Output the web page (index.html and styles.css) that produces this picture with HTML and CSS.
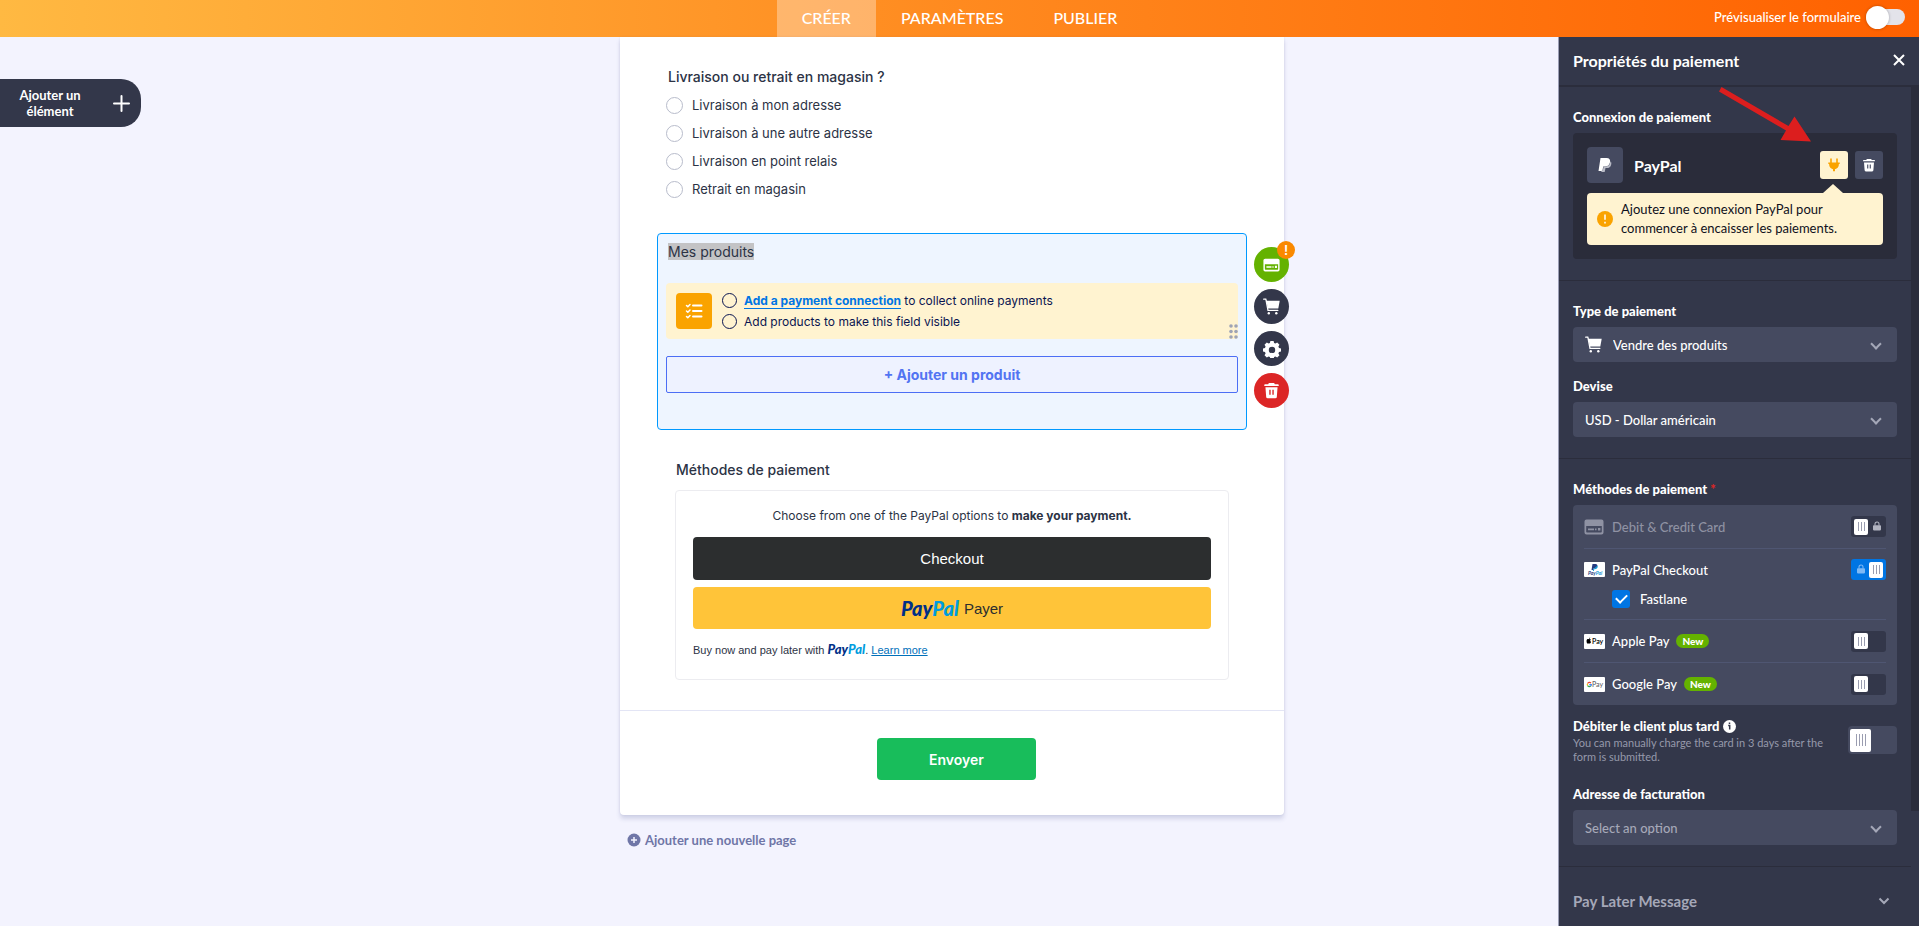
FILE: index.html
```html
<!DOCTYPE html>
<html lang="fr">
<head>
   <meta charset="UTF-8">
   <meta name="viewport" content="width=device-width, initial-scale=1">
   <link rel="stylesheet" href="styles.css">
   <title>Propriétés du paiement</title>
</head>

<body>
   <!-- Icônes partagées -->
   <svg class="sprite" aria-hidden="true">
      <symbol id="cart" viewBox="0 0 17 17">
         <path d="M.7 1.2h2.1l.7 2.4M3.2 3 5 12.4h9.8" fill="none" stroke="currentColor" stroke-width="1.3" stroke-linecap="round"/>
         <path d="M3.4 2.8h13.3l-1.4 7.8H4.9z"/>
         <circle cx="5.8" cy="15.2" r="1.2"/><circle cx="13.3" cy="15.2" r="1.2"/>
      </symbol>
      <symbol id="trash" viewBox="0 0 16 16">
         <path d="M5.5 1h5l.6 1.2h3c.4 0 .7.3.7.7v.9H1.2v-.9c0-.4.3-.7.7-.7h3zM2.3 5h11.4l-.7 9a1.4 1.4 0 0 1-1.4 1.3H4.4A1.4 1.4 0 0 1 3 14zM5.9 7.3v4.8h1.3V7.3zm2.9 0v4.8h1.3V7.3z" fill-rule="evenodd"/>
      </symbol>
      <symbol id="card" viewBox="0 0 20 16">
         <path d="M2.5 .5h15a2 2 0 0 1 2 2v11a2 2 0 0 1-2 2h-15a2 2 0 0 1-2-2v-11a2 2 0 0 1 2-2zM2.2 7v5.8c0 .5.3.8.8.8h14c.5 0 .8-.3.8-.8V7z" fill-rule="evenodd"/>
         <path d="M4 9.4h6v1.8H4zM11 9.4h1.5v1.8H11zM14 9h2.4v2.5H14z"/>
      </symbol>
      <symbol id="lock" viewBox="0 0 10 12">
         <path d="M1 5h8c.6 0 1 .4 1 1v4.5c0 .6-.4 1-1 1H1c-.6 0-1-.4-1-1V6c0-.6.4-1 1-1z"/>
         <path d="M2.5 5.5V3.5a2.5 2.5 0 0 1 5 0v2" fill="none" stroke="currentColor" stroke-width="1.3"/>
      </symbol>
   </svg>

   <header class="topbar">
      <nav class="tabs">
         <a href="#creer" class="tab active">CRÉER</a>
         <a href="#parametres" class="tab">PARAMÈTRES</a>
         <a href="#publier" class="tab">PUBLIER</a>
      </nav>
      <label class="preview">Prévisualiser le formulaire
         <input type="checkbox" class="preview-switch">
      </label>
   </header>

   <div class="workspace">
      <button class="add-element">
         <span>Ajouter un élément</span>
         <svg width="17" height="17" viewBox="0 0 17 17"><path d="M8.5 1v15M1 8.5h15" stroke="#fff" stroke-width="2" stroke-linecap="round"/></svg>
      </button>

      <main class="canvas">
         <div class="sheet">
            <fieldset class="delivery">
               <legend>Livraison ou retrait en magasin ?</legend>
               <label><input type="radio" name="delivery">Livraison à mon adresse</label>
               <label><input type="radio" name="delivery">Livraison à une autre adresse</label>
               <label><input type="radio" name="delivery">Livraison en point relais</label>
               <label><input type="radio" name="delivery">Retrait en magasin</label>
            </fieldset>

            <section class="products">
               <h2><mark>Mes produits</mark></h2>
               <div class="todo">
                  <span class="todo-icon">
                     <svg width="18" height="18" viewBox="0 0 18 18" fill="none" stroke="#fff" stroke-linecap="round" stroke-linejoin="round"><path d="M1.5 3.5 2.8 4.8 5 2.5M1.5 9 2.8 10.3 5 8M1.5 14.5 2.8 15.8 5 13.5" stroke-width="1.5"/><path d="M8 3.5h8.5M8 9h8.5M8 14.5h8.5" stroke-width="2"/></svg>
                  </span>
                  <ul>
                     <li><span><a href="#connexion">Add a payment connection</a> to collect online payments</span></li>
                     <li><span>Add products to make this field visible</span></li>
                  </ul>
                  <svg class="drag" width="9" height="15" viewBox="0 0 9 15" fill="#9ea3b5"><circle cx="2" cy="2" r="1.8"/><circle cx="7" cy="2" r="1.8"/><circle cx="2" cy="7.5" r="1.8"/><circle cx="7" cy="7.5" r="1.8"/><circle cx="2" cy="13" r="1.8"/><circle cx="7" cy="13" r="1.8"/></svg>
               </div>
               <button class="add-product">+ Ajouter un produit</button>

               <div class="field-actions">
                  <button class="round green" aria-label="Paiement"><svg width="17" height="14"><use href="#card"/></svg><span class="badge">!</span></button>
                  <button class="round" aria-label="Produits"><svg width="17" height="17"><use href="#cart"/></svg></button>
                  <button class="round" aria-label="Réglages">
                     <svg width="18" height="18" viewBox="0 0 18 18"><path fill-rule="evenodd" d="M7.4 1h3.2l.5 2 1.3.6 1.8-1.1 2.3 2.3-1.1 1.8.6 1.3 2 .5v3.2l-2 .5-.6 1.3 1.1 1.8-2.3 2.3-1.8-1.1-1.3.6-.5 2H7.4l-.5-2-1.3-.6-1.8 1.1-2.3-2.3 1.1-1.8-.6-1.300-2-.5V8.400l2-.5.6-1.300-1.100-1.800 2.300-2.300 1.800 1.100L6.900 3zM9 6.700a3.200 3.200 0 1 0 0 6.400 3.200 3.200 0 0 0 0-6.400z"/></svg>
                  </button>
                  <button class="round red" aria-label="Supprimer"><svg width="17" height="17"><use href="#trash"/></svg></button>
               </div>
            </section>

            <section class="methods">
               <h2>Méthodes de paiement</h2>
               <div class="methods-box">
                  <p class="choose">Choose from one of the PayPal options to <b>make your payment.</b></p>
                  <button class="checkout">Checkout</button>
                  <button class="payer"><span class="pp-logo">Pay<i>Pal</i></span> Payer</button>
                  <p class="later">Buy now and pay later with <span class="pp-logo small">Pay<i>Pal</i></span>. <a href="#more">Learn more</a></p>
               </div>
            </section>

            <footer class="submit"><button>Envoyer</button></footer>
         </div>

         <button class="new-page">
            <svg width="14" height="14" viewBox="0 0 14 14"><circle cx="7" cy="7" r="6.5" fill="#6f76a7"/><path d="M7 4v6M4 7h6" stroke="#f3f3fe" stroke-width="1.5"/></svg>
            Ajouter une nouvelle page
         </button>
      </main>

      <aside class="panel">
         <header class="panel-head">
            <h1>Propriétés du paiement</h1>
            <button aria-label="Fermer"><svg width="12" height="12" viewBox="0 0 12 12"><path d="M1 1l10 10M11 1 1 11" stroke="#fff" stroke-width="2"/></svg></button>
         </header>

         <div class="panel-body">
            <div class="panel-content">
               <section class="block connection">
                  <h3>Connexion de paiement</h3>
                  <div class="account">
                     <div class="account-row">
                        <span class="account-icon"><svg width="14" height="16" viewBox="0 0 14 16"><path d="M2.5 1h6c3 0 4 1.7 3.5 4.2C11.4 8.4 9.5 9.5 7 9.5H5.2L4.4 14H.5z" fill="#fff"/><path d="M12.5 4.2c1 .8 1 2 .7 3.2-.5 2.7-2.2 3.7-4.5 3.7H7.5L6.7 15H3.3l.3-1.5h1.2l.8-4H7c2.9 0 4.9-1.4 5.5-5.3z" fill="#b9bbc6"/></svg></span>
                        <strong>PayPal</strong>
                        <button class="square plug" aria-label="Connecter"><svg width="12" height="14" viewBox="0 0 12 14" fill="#faa300"><path d="M2.2.5h1.6v4H2.2zM8.2.5h1.6v4H8.2zM.3 4.5h11.4v1.6h-.8c0 2.7-1.4 4.7-3.9 5.2v2H5v-2C2.5 10.8 1.1 8.8 1.1 6.1H.3z"/></svg></button>
                        <button class="square" aria-label="Supprimer"><svg width="14" height="14"><use href="#trash"/></svg></button>
                     </div>
                     <div class="tip">
                        <svg width="16" height="16" viewBox="0 0 16 16"><circle cx="8" cy="8" r="8" fill="#faa300"/><path d="M8 3.5v5.3M8 10.8v1.7" stroke="#fff" stroke-width="1.5"/></svg>
                        <p>Ajoutez une connexion PayPal pour commencer à encaisser les paiements.</p>
                     </div>
                  </div>
               </section>

               <section class="block">
                  <label for="type">Type de paiement</label>
                  <div class="pick with-icon">
                     <svg width="17" height="17"><use href="#cart"/></svg>
                     <select id="type"><option>Vendre des produits</option></select>
                  </div>
                  <label for="currency" class="next">Devise</label>
                  <div class="pick"><select id="currency"><option>USD - Dollar américain</option></select></div>
               </section>

               <section class="block gateways">
                  <h3>Méthodes de paiement <em>*</em></h3>
                  <ul>
                     <li class="off">
                        <svg width="20" height="16"><use href="#card"/></svg>
                        <label for="card-pay">Debit &amp; Credit Card</label>
                        <span class="switch"><input type="checkbox" id="card-pay"><svg width="8" height="10"><use href="#lock"/></svg></span>
                     </li>
                     <li class="tall">
                        <div class="line">
                           <svg width="21" height="15" viewBox="0 0 21 15"><rect width="21" height="15" rx="1" fill="#fff"/><path d="M8.5 2h3c1.5 0 2.2 1 1.8 2.3-.3 1.3-1.2 1.9-2.6 1.9h-1L9.3 8H7.5z" fill="#253b80"/><path d="M13.5 3.5c.7 1.7-.3 3.7-2.5 3.7h-.9L9.9 9H8.800l.4-1.700z" fill="#179bd7"/><text x="4" y="13" font-size="5" font-weight="700" font-style="italic" fill="#253b80">Pay<tspan fill="#179bd7">Pal</tspan></text></svg>
                           <label for="pp-checkout">PayPal Checkout</label>
                           <span class="switch"><input type="checkbox" id="pp-checkout" checked><svg width="8" height="10"><use href="#lock"/></svg></span>
                        </div>
                        <label class="fastlane"><input type="checkbox" checked>Fastlane</label>
                     </li>
                     <li>
                        <svg width="21" height="15" viewBox="0 0 21 15"><rect width="21" height="15" rx="1" fill="#fff"/><g fill="#000"><path d="M5.2 5.2c.8-.4 1.6 0 1.7.2-1 .6-.8 2 .2 2.400-.3 1-.9 1.800-1.500 1.800-.4 0-.6-.2-1-.2s-.6.200-1 .2C2.800 9.600 2 6.200 3.200 5.300c.7-.5 1.500 0 2-.1zM5 4.900c0-.8.5-1.400 1.200-1.500 0 .8-.5 1.400-1.200 1.500z"/><text x="8" y="10" font-size="7" font-weight="600">Pay</text></g></svg>
                        <label for="apple">Apple Pay</label><span class="new">New</span>
                        <span class="switch"><input type="checkbox" id="apple"></span>
                     </li>
                     <li>
                        <svg width="21" height="15" viewBox="0 0 21 15"><rect width="21" height="15" rx="1" fill="#fff"/><g fill="none" stroke-width="1.2"><path d="M7 6.100A2 2 0 0 0 3.600 6.600" stroke="#ea4335"/><path d="M3.600 6.600a2 2 0 0 0 0 2" stroke="#fbbc05"/><path d="M3.600 8.600A2 2 0 0 0 6.700 9" stroke="#34a853"/><path d="M5.300 7.700h2c0 .5-.2 1-.6 1.400" stroke="#4285f4"/></g><text x="8" y="10" font-size="7" fill="#5f6368">Pay</text></svg>
                        <label for="google">Google Pay</label><span class="new">New</span>
                        <span class="switch"><input type="checkbox" id="google"></span>
                     </li>
                  </ul>

                  <div class="charge">
                     <div>
                        <label for="charge">Débiter le client plus tard <svg width="13" height="13" viewBox="0 0 13 13"><circle cx="6.5" cy="6.5" r="6.5" fill="#fff"/><path d="M6.500 2.600v1.500M5.200 5.600h1.500v4" stroke="#33374a" stroke-width="1.5" fill="none"/></svg></label>
                        <p>You can manually charge the card in 3 days after the form is submitted.</p>
                     </div>
                     <input type="checkbox" id="charge">
                  </div>

                  <label for="billing">Adresse de facturation</label>
                  <div class="pick empty"><select id="billing"><option>Select an option</option></select></div>
               </section>

               <button class="block later-message">Pay Later Message
                  <svg width="12" height="8" viewBox="0 0 12 8"><path d="M1.5 1.5 6 6l4.5-4.5" fill="none" stroke="#a5a8b8" stroke-width="2"/></svg>
               </button>
            </div>
            <div class="scroll"></div>
         </div>

         <svg class="arrow" width="94" height="56" viewBox="0 0 94 56"><path d="M3.5 0 70.5 39 76.5 29.5 93 54.5 62.5 53 68 43.5 1 4.5z" fill="#dc1e1e"/></svg>
      </aside>
   </div>
</body>
</html>
```

FILE: styles.css
```css
* {
   margin:0;
   padding:0;
   box-sizing:border-box;
}

body {
   display:flex;
   flex-direction:column;
   height:100vh;
   overflow:hidden;
   background:#f3f3fe;
   color:#2c3345;
   font-family:"Inter", sans-serif;
   font-size:13px;
}

button, input, select {
   border:0;
   background:none;
   color:inherit;
   font:inherit;
   cursor:pointer;
   appearance:none;
}

ul {
   list-style:none;
}

svg {
   display:block;
   flex:none;
}

svg:not([fill]) {
   fill:currentColor;
}

.sprite {
   position:absolute;
   width:0;
   height:0;
}

/* Barre du haut */
.topbar, .add-element, .new-page, .panel {
   font-family:"Lato", sans-serif;
}

.topbar {
   display:grid;
   grid-template-columns:1fr auto 1fr;
   height:37px;
   flex:none;
   background:linear-gradient(90deg, #ffb942, #ff8a1f 50%, #ff6100);
   color:#fff;
}

.tabs {
   display:flex;
   grid-column:2;
}

.tab {
   padding:0 25px;
   color:#fff;
   font-size:16px;
   font-weight:500;
   line-height:35px;
   text-decoration:none;
}

.tab.active {
   background:rgba(255,255,255,.33);
}

.preview {
   display:flex;
   align-items:center;
   justify-content:flex-end;
   gap:5px;
   padding:0 14px 3px 0;
   font-weight:500;
}

.preview-switch {
   display:flex;
   align-items:center;
   width:39px;
   height:16px;
   border-radius:8px;
   background:#e3e3ea;
}

.preview-switch::before {
   content:"";
   width:23px;
   height:23px;
   flex:none;
   border-radius:50%;
   background:#fff;
   box-shadow:0 0 3px rgba(0,0,0,.3);
}

.workspace {
   display:grid;
   grid-template-columns:1fr 664px 1fr 15px;
   grid-template-rows:100%;
   flex:1;
   min-height:0;
}

.add-element {
   display:flex;
   align-items:center;
   justify-content:space-between;
   width:141px;
   height:48px;
   margin-top:42px;
   padding:0 11px 0 15px;
   border-radius:0 20px 20px 0;
   background:#33374a;
   color:#fff;
   font-weight:700;
   line-height:16px;
}

.add-element span {
   width:70px;
}

/* Formulaire */
.sheet {
   border-radius:0 0 4px 4px;
   background:#fff;
   box-shadow:0 4px 4px rgba(84,95,150,.2), 0 0 2px rgba(84,95,150,.15);
}

.delivery {
   padding:34px 46px 0;
   border:0;
}

.delivery legend {
   padding:30px 2px 0;
   margin-bottom:-30px;
   font-size:14px;
   font-weight:500;
   line-height:20px;
}

.delivery label {
   display:flex;
   align-items:center;
   gap:9px;
   height:28px;
}

.delivery input {
   width:17px;
   height:17px;
   border:1px solid #b8bccb;
   border-radius:50%;
}

.products {
   position:relative;
   margin:30px 37px 0;
   padding:9px 8px 36px;
   border:1px solid #0099ff;
   border-radius:4px;
   background:#eef5ff;
}

h2 {
   font-size:14px;
   font-weight:500;
   line-height:18px;
}

.products h2 {
   margin-left:2px;
   font-weight:400;
}

.products mark {
   background:#c3c3c5;
   color:#2c3345;
}

.todo {
   display:flex;
   align-items:center;
   gap:10px;
   position:relative;
   height:56px;
   margin:22px 0 17px;
   padding:0 10px;
   border-radius:4px;
   background:#fff3d0;
   color:#0a1551;
   font-size:12px;
}

.todo-icon {
   display:grid;
   place-items:center;
   width:36px;
   height:36px;
   border-radius:4px;
   background:#faa300;
}

.todo li {
   display:flex;
   align-items:center;
   gap:7px;
   height:21px;
}

.todo li::before {
   content:"";
   width:13px;
   height:13px;
   border:1px solid #0a1551;
   border-radius:50%;
}

.todo a {
   border-bottom:1px solid #0075e3;
   color:#0075e3;
   font-weight:700;
   text-decoration:none;
}

.drag {
   position:absolute;
   right:0;
   bottom:0;
}

.add-product {
   display:block;
   width:100%;
   height:37px;
   border:1px solid #4c6ef5;
   border-radius:2px;
   background:#eef2ff;
   color:#5274f2;
   font-size:14px;
   font-weight:700;
}

.field-actions {
   display:flex;
   flex-direction:column;
   gap:7px;
   position:absolute;
   left:596px;
   top:13px;
}

.round {
   display:grid;
   place-items:center;
   position:relative;
   width:35px;
   height:35px;
   border-radius:50%;
   background:#33374a;
   color:#fff;
}

.green {
   background:#64b200;
}

.red {
   background:#dc2626;
}

.badge {
   position:absolute;
   right:-6px;
   top:-6px;
   width:18px;
   height:18px;
   border-radius:50%;
   background:#fa8900;
   font-weight:600;
   line-height:18px;
}

.methods {
   padding:30px 55px;
}

.methods h2 {
   margin:1px 1px 11px;
}

.methods-box {
   padding:16px 17px 20px;
   border:1px solid #ececf0;
   border-radius:4px;
}

.choose {
   margin-bottom:12px;
   font-size:12px;
   line-height:18px;
   text-align:center;
}

.checkout, .payer {
   display:flex;
   align-items:center;
   justify-content:center;
   gap:5px;
   width:100%;
   height:43px;
   border-radius:4px;
   background:#2c2e2f;
   color:#fff;
   font-family:"Liberation Sans", Arial, sans-serif;
   font-size:15px;
}

.payer {
   height:42px;
   margin-top:7px;
   background:#ffc439;
   color:#2c2e2f;
}

.pp-logo {
   color:#003087;
   font-family:"Lato", sans-serif;
   font-size:20px;
   font-style:italic;
   font-weight:900;
}

.pp-logo i {
   color:#009cde;
}

.pp-logo.small {
   font-size:13px;
}

.later {
   margin-top:11px;
   font-family:"Liberation Sans", Arial, sans-serif;
   font-size:11px;
   line-height:18px;
}

.later a {
   color:#0070ba;
}

.submit {
   display:flex;
   justify-content:center;
   padding:27px 0 35px 9px;
   border-top:1px solid #e3e5f5;
}

.submit button {
   width:159px;
   height:42px;
   border-radius:4px;
   background:#18bd5b;
   color:#fff;
   font-size:14px;
   font-weight:600;
}

.new-page {
   display:flex;
   align-items:center;
   gap:4px;
   margin:17px 7px;
   color:#6f76a7;
   font-weight:700;
}

/* Panneau de droite */
.panel {
   display:flex;
   flex-direction:column;
   grid-column:3 / 5;
   justify-self:end;
   position:relative;
   width:361px;
   border-left:1px solid #9a9db5;
   background:#33374a;
   color:#fff;
}

.panel-head {
   display:flex;
   align-items:center;
   justify-content:space-between;
   height:50px;
   flex:none;
   padding:0 14px 2px;
   border-bottom:2px solid #2b2d3c;
}

h1 {
   font-size:16px;
   font-weight:700;
}

.panel-body {
   display:flex;
   flex:1;
   min-height:0;
}

.panel-content {
   flex:1;
}

.scroll {
   width:8px;
   height:724px;
   background:#2b2d3c;
}

.block {
   padding:20px 14px 21px;
   border-bottom:1px solid #2b2d3c;
}

h3, .block > label, .charge label {
   display:block;
   padding-bottom:6px;
   font-size:13px;
   font-weight:900;
   line-height:20px;
}

.block > .next {
   margin-top:14px;
}

.account {
   padding:14px;
   border-radius:4px;
   background:#2a2c3a;
}

.account-row {
   display:flex;
   align-items:center;
   gap:7px;
}

.account-icon {
   display:grid;
   place-items:center;
   width:36px;
   height:36px;
   border-radius:4px;
   background:#454a60;
}

.account strong {
   flex:1;
   margin-left:4px;
   font-size:16px;
}

.square {
   display:grid;
   place-items:center;
   width:28px;
   height:28px;
   border-radius:3px;
   background:#454a60;
}

.plug {
   background:#fff3d0;
}

.tip {
   display:flex;
   align-items:center;
   gap:8px;
   position:relative;
   margin-top:10px;
   padding:7px 10px;
   border-radius:4px;
   background:#fff3d0;
   color:#0f1020;
   line-height:19px;
}

.tip::before {
   content:"";
   position:absolute;
   right:40px;
   top:-9px;
   border:solid transparent;
   border-width:0 10px 9px;
   border-bottom-color:#fff3d0;
}

.pick {
   display:flex;
   align-items:center;
   position:relative;
   height:35px;
   border-radius:4px;
   background:#454a60;
}

.pick select {
   width:100%;
   height:100%;
   padding:0 12px;
   font-weight:500;
}

.pick.with-icon svg {
   margin-left:12px;
}

.pick.with-icon select {
   padding-left:11px;
}

.pick.empty {
   color:#a5a8b8;
}

.pick::after {
   content:"";
   position:absolute;
   right:17px;
   top:13px;
   width:6px;
   height:6px;
   border:solid #a5a8b8;
   border-width:0 2px 2px 0;
   transform:rotate(45deg);
}

.gateways em {
   color:#dc2626;
   font-style:normal;
}

.gateways ul {
   padding:0 11px;
   border-radius:4px;
   background:#454a60;
}

.gateways li, .line {
   display:flex;
   align-items:center;
   gap:7px;
   height:43px;
   font-weight:500;
}

.gateways li + li {
   border-top:1px solid #4f5672;
}

.gateways .tall {
   display:block;
   height:71px;
}

.gateways .line {
   height:41px;
}

.gateways .off {
   gap:8px;
   color:#8f92a3;
}

.fastlane {
   display:flex;
   align-items:center;
   gap:10px;
   margin-left:28px;
   height:18px;
}

.fastlane input {
   display:grid;
   place-items:center;
   width:18px;
   height:18px;
   border-radius:3px;
   background:#0075e3;
}

.fastlane input::before {
   content:"";
   width:5px;
   height:9px;
   margin-bottom:3px;
   border:solid #fff;
   border-width:0 2px 2px 0;
   transform:rotate(45deg);
}

.new {
   height:14px;
   padding:0 6px;
   border-radius:7px;
   background:#64b200;
   font-size:10px;
   font-weight:900;
   line-height:14px;
}

.switch {
   display:flex;
   position:relative;
   margin-left:auto;
}

.switch input {
   display:flex;
   align-items:center;
   width:35px;
   height:21px;
   padding:0 3px;
   border-radius:3px;
   background:#33374a;
}

.switch input::before, .charge input::before {
   content:"";
   width:14px;
   height:16px;
   border-radius:2px;
   background:repeating-linear-gradient(90deg, #9a9db0 0 1px, transparent 1px 3px) center / 7px 9px no-repeat #fff;
}

.switch input:checked {
   justify-content:flex-end;
   background:#0075e3;
}

.switch svg {
   position:absolute;
   right:5px;
   top:5px;
   color:#b1b3c0;
}

.switch input:checked + svg {
   right:auto;
   left:6px;
   color:#7fb9f5;
}

.charge {
   display:flex;
   justify-content:space-between;
   margin:11px 0 20px;
}

.charge label {
   display:flex;
   align-items:center;
   gap:4px;
   padding:0;
}

.charge p {
   width:260px;
   color:#9699aa;
   font-size:11px;
   line-height:14px;
}

.charge input {
   display:flex;
   align-items:center;
   width:49px;
   height:28px;
   margin-top:10px;
   padding:0 2px;
   border-radius:4px;
   background:#454a60;
}

.charge input::before {
   width:21px;
   height:23px;
   background-size:10px 12px;
}

.later-message {
   display:flex;
   align-items:center;
   justify-content:space-between;
   width:100%;
   height:68px;
   padding-right:21px;
   border:0;
   color:#a5a8b8;
   font-size:15px;
   font-weight:700;
}

.arrow {
   position:absolute;
   left:159px;
   top:50px;
}
```
